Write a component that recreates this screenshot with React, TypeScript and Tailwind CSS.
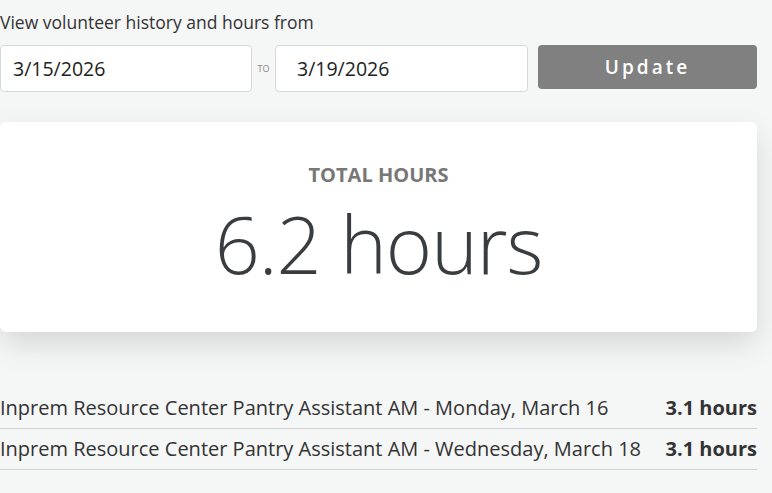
export default function App() {
  const rows = [
    { label: "Inprem Resource Center Pantry Assistant AM - Monday, March 16", hours: "3.1 hours" },
    { label: "Inprem Resource Center Pantry Assistant AM - Wednesday, March 18", hours: "3.1 hours" },
  ];
  return (
    <div
      className="min-h-[493px] bg-[#f5f6f6] text-[#333]"
      style={{ fontFamily: '"Open Sans", sans-serif' }}
    >
      <div className="w-[757px]">
        <div className="pt-[10px] text-[17.5px] leading-[24px] text-[#333]">
          View volunteer history and hours from
        </div>
        <div className="mt-[11px] flex items-start">
          <div className="flex h-[47px] w-[252px] items-center rounded-[4px] border border-[#d4d6d8] bg-white pl-[12px] text-[19.5px] text-[#222]">
            3/15/2026
          </div>
          <div className="flex h-[47px] w-[23px] items-center justify-center text-[9px] text-[#888]">
            TO
          </div>
          <div className="flex h-[47px] w-[253px] items-center rounded-[4px] border border-[#d4d6d8] bg-white pl-[21px] text-[19.5px] text-[#222]">
            3/19/2026
          </div>
          <div className="ml-[10px] flex h-[44px] flex-1 items-center justify-center rounded-[4px] bg-[#808080] text-[19px] font-semibold tracking-[3px] text-white">
            Update
          </div>
        </div>
        <div className="mt-[30px] flex h-[210px] flex-col items-center rounded-[6px] bg-white shadow-[0_12px_30px_rgba(0,0,0,0.13)]">
          <div className="mt-[40px] text-[20px] font-bold leading-[26px] text-[#777]">
            TOTAL HOURS
          </div>
          <div className="mt-[6px] text-[79px] font-light leading-[100px] tracking-[-1px] text-[#3a3d3f]">
            6.2 hours
          </div>
        </div>
        <div className="mt-[56px]">
          {rows.map((r) => (
            <div
              key={r.label}
              className="flex h-[41px] items-center justify-between border-b border-[#cfd1d2] text-[20px] text-[#333]"
            >
              <span>{r.label}</span>
              <span className="font-bold">{r.hours}</span>
            </div>
          ))}
        </div>
      </div>
    </div>
  );
}
